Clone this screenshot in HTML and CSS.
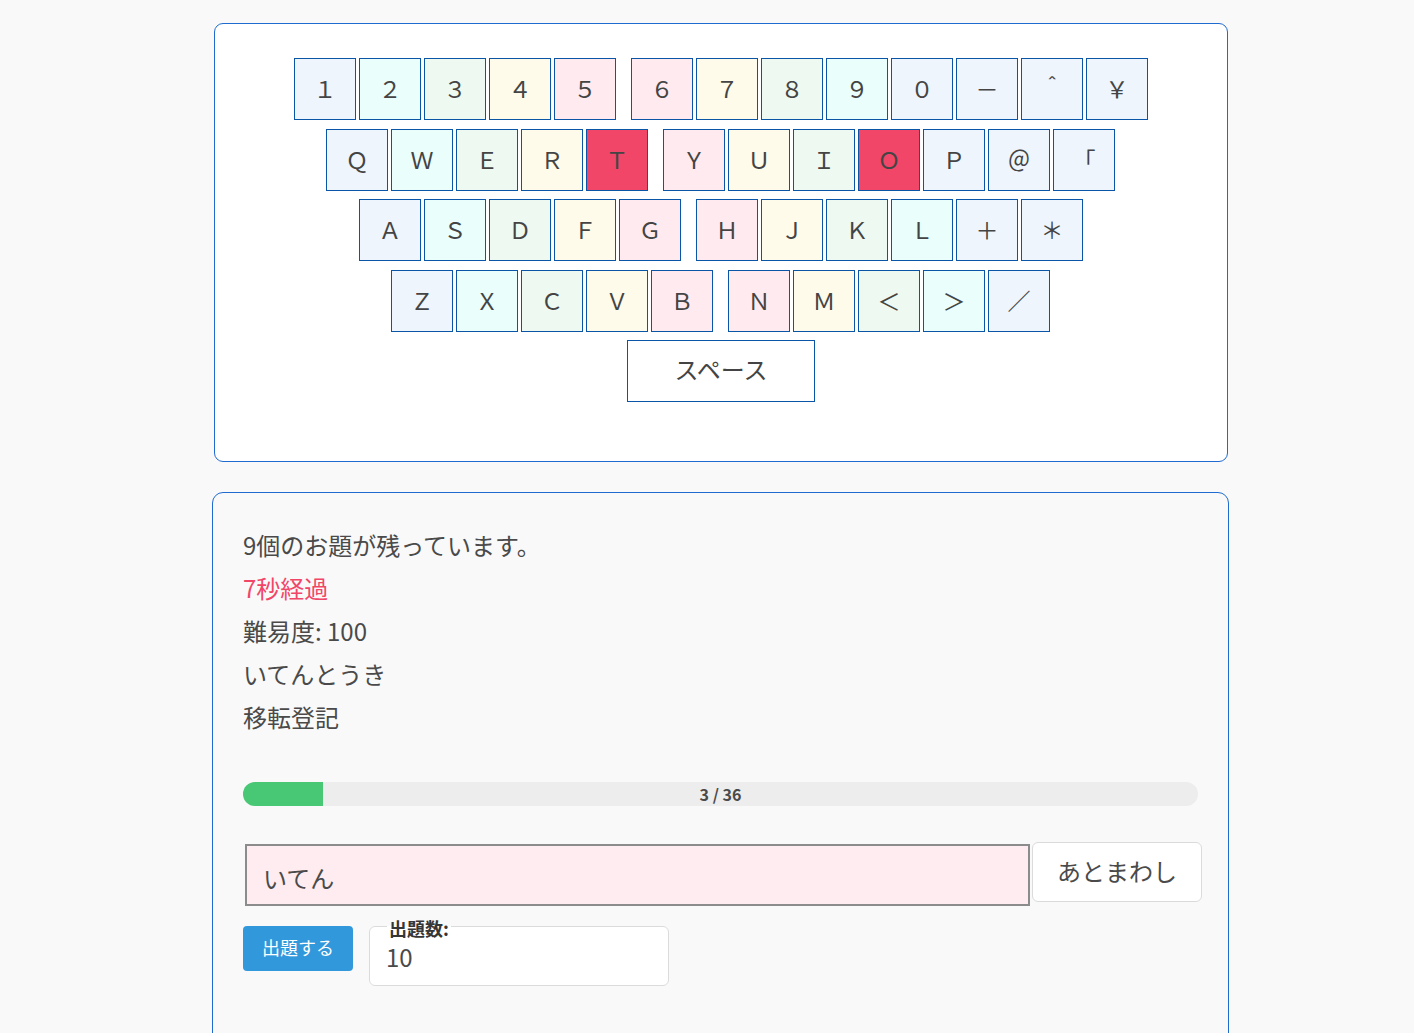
FILE: index.html
```html
<!DOCTYPE html>
<html lang="ja">
<head>
<meta charset="utf-8">
<title>タイピング</title>
<link rel="stylesheet" href="styles.css">
</head>
<body>
<div class="page">
  <section class="keyboard-card">
    <div class="kb-row">
      <div class="hand">
        <span class="key c1">１</span><span class="key c2">２</span><span class="key c3">３</span><span class="key c4">４</span><span class="key c5">５</span>
      </div>
      <div class="hand">
        <span class="key c5">６</span><span class="key c4">７</span><span class="key c3">８</span><span class="key c2">９</span><span class="key c1">０</span><span class="key c1">－</span><span class="key c1">＾</span><span class="key c1">￥</span>
      </div>
    </div>
    <div class="kb-row odd">
      <div class="hand">
        <span class="key c1">Ｑ</span><span class="key c2">Ｗ</span><span class="key c3">Ｅ</span><span class="key c4">Ｒ</span><span class="key hit">Ｔ</span>
      </div>
      <div class="hand">
        <span class="key c5">Ｙ</span><span class="key c4">Ｕ</span><span class="key c3">Ｉ</span><span class="key hit">Ｏ</span><span class="key c1">Ｐ</span><span class="key c1">＠</span><span class="key c1">「</span>
      </div>
    </div>
    <div class="kb-row">
      <div class="hand">
        <span class="key c1">Ａ</span><span class="key c2">Ｓ</span><span class="key c3">Ｄ</span><span class="key c4">Ｆ</span><span class="key c5">Ｇ</span>
      </div>
      <div class="hand">
        <span class="key c5">Ｈ</span><span class="key c4">Ｊ</span><span class="key c3">Ｋ</span><span class="key c2">Ｌ</span><span class="key c1">＋</span><span class="key c1">＊</span>
      </div>
    </div>
    <div class="kb-row odd">
      <div class="hand">
        <span class="key c1">Ｚ</span><span class="key c2">Ｘ</span><span class="key c3">Ｃ</span><span class="key c4">Ｖ</span><span class="key c5">Ｂ</span>
      </div>
      <div class="hand">
        <span class="key c5">Ｎ</span><span class="key c4">Ｍ</span><span class="key c3">＜</span><span class="key c2">＞</span><span class="key c1">／</span>
      </div>
    </div>
    <div class="kb-row">
      <span class="key space">スペース</span>
    </div>
  </section>

  <section class="game-card">
    <p class="line">9個のお題が残っています。</p>
    <p class="line danger">7秒経過</p>
    <p class="line">難易度: 100</p>
    <p class="line">いてんとうき</p>
    <p class="line">移転登記</p>

    <div class="progress">
      <div class="progress-fill" style="width: 8.33%"></div>
      <span class="progress-label">3 / 36</span>
    </div>

    <div class="answer-row">
      <input class="answer-input" type="text" value="いてん">
      <button class="skip-btn" type="button">あとまわし</button>
    </div>

    <div class="controls">
      <button class="start-btn" type="button">出題する</button>
      <fieldset class="count-field">
        <legend>出題数:</legend>
        <span class="count-value">10</span>
      </fieldset>
    </div>
  </section>
</div>
</body>
</html>
```

FILE: styles.css
```css
* {
  box-sizing: border-box;
}

html, body {
  margin: 0;
  padding: 0;
  background: #f9f9f9;
}

body {
  font-family: "Noto Sans CJK JP", "Noto Sans", sans-serif;
  color: #4a4a4a;
}

.page {
  padding-top: 23px;
}

.keyboard-card {
  margin-left: 214px;
  width: 1014px;
  background: #ffffff;
  border: 1px solid #1f6bd0;
  border-radius: 9px;
  padding: 34px 0 59px;
  display: flex;
  flex-direction: column;
  gap: 8.5px;
}

.kb-row {
  display: flex;
  justify-content: center;
  gap: 15px;
}

.kb-row.odd {
  padding-right: 1px;
}

.hand {
  display: flex;
  gap: 3px;
}

.key {
  width: 62px;
  height: 62px;
  border: 1px solid #0b55a6;
  display: flex;
  align-items: center;
  justify-content: center;
  font-family: "Noto Sans CJK JP", sans-serif;
  font-size: 23px;
  color: #444444;
  line-height: 1;
  padding-bottom: 1px;
}

.c1 { background: #eef5fc; }
.c2 { background: #eafefc; }
.c3 { background: #eef9f1; }
.c4 { background: #fefbea; }
.c5 { background: #ffebef; }
.hit { background: #f14668; }

.key.space {
  width: 188px;
  background: #ffffff;
  font-size: 24px;
  padding-bottom: 5px;
}

.game-card {
  margin-top: 30px;
  margin-left: 212px;
  width: 1017px;
  background: #f9f9f9;
  border: 1px solid #1f6bd0;
  border-radius: 11px;
  padding: 30px 30px 60px;
}

.line {
  margin: 0;
  font-size: 24px;
  line-height: 43px;
  color: #4a4a4a;
}

.line.danger {
  color: #f14668;
}

.progress {
  position: relative;
  margin-top: 44px;
  height: 24px;
  border-radius: 9999px;
  background: #ededed;
  overflow: hidden;
}

.progress-fill {
  height: 100%;
  background: #48c774;
}

.progress-label {
  position: absolute;
  left: 0;
  right: 0;
  top: 0;
  line-height: 24px;
  text-align: center;
  font-size: 16px;
  font-weight: 600;
  color: #4a4a4a;
}

.answer-row {
  margin-top: 36px;
  display: flex;
  align-items: flex-start;
  gap: 2px;
  margin-right: -4px;
}

.answer-input {
  margin: 2px 0 0 2px;
  width: 785px;
  height: 62px;
  border: 2px solid #8c8c8c;
  background: #feecf0;
  padding: 4px 0 0 16px;
  font-family: "Noto Sans CJK JP", sans-serif;
  font-size: 24px;
  color: #4a4a4a;
  outline: none;
}

.skip-btn {
  width: 170px;
  height: 60px;
  background: #ffffff;
  border: 1px solid #dbdbdb;
  border-radius: 6px;
  font-family: "Noto Sans CJK JP", sans-serif;
  font-size: 24px;
  color: #4a4a4a;
  padding: 0 0 4px;
}

.controls {
  margin-top: 20px;
  display: flex;
  align-items: flex-start;
  gap: 16px;
}

.start-btn {
  width: 110px;
  height: 45px;
  background: #3298dc;
  color: #ffffff;
  border: none;
  border-radius: 4px;
  font-family: "Noto Sans CJK JP", sans-serif;
  font-size: 18px;
  padding: 0 0 4px;
}

.count-field {
  margin: -11px 0 0 0;
  width: 300px;
  height: 71px;
  border: 1px solid #dbdbdb;
  border-radius: 6px;
  background: #ffffff;
  padding: 0 0 0 16px;
}

.count-field legend {
  font-size: 18px;
  line-height: 18px;
  font-weight: 700;
  color: #363636;
  padding: 4px 2px 0;
  margin-left: 1px;
}

.count-value {
  display: block;
  font-size: 24px;
  line-height: 30px;
  margin-top: 5px;
  color: #4a4a4a;
}
```
